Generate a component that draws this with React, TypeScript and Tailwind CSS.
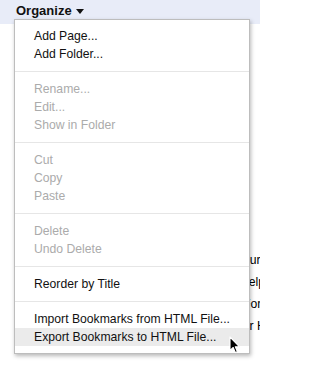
const items: ({ label: string; enabled?: boolean; active?: boolean } | "sep")[] = [
  { label: "Add Page...", enabled: true },
  { label: "Add Folder...", enabled: true },
  "sep",
  { label: "Rename..." },
  { label: "Edit..." },
  { label: "Show in Folder" },
  "sep",
  { label: "Cut" },
  { label: "Copy" },
  { label: "Paste" },
  "sep",
  { label: "Delete" },
  { label: "Undo Delete" },
  "sep",
  { label: "Reorder by Title", enabled: true },
  "sep",
  { label: "Import Bookmarks from HTML File...", enabled: true },
  { label: "Export Bookmarks to HTML File...", enabled: true, active: true },
];

const Cursor = () => (
  <svg width="12" height="18" viewBox="0 0 12 18" className="absolute left-[229px] top-[336px]">
    <path
      d="M1 1 L1 14.5 L4.2 11.5 L6.4 16.6 L8.4 15.7 L6.3 10.8 L10.6 10.8 Z"
      fill="#000"
      stroke="#fff"
      strokeWidth="1.1"
      strokeLinejoin="round"
    />
  </svg>
);

export default function App() {
  return (
    <div className="relative w-[260px] h-[366px] overflow-hidden bg-white font-['Liberation_Sans',Arial,sans-serif] text-[12.2px] text-black">
      <div className="h-[24px] bg-[#e8ecf8] pl-[16px] flex items-start pt-[3px]">
        <span className="font-bold text-[13px] leading-[16px] text-[#111]">Organize</span>
        <svg width="8" height="5" viewBox="0 0 8 5" className="ml-[4px] mt-[6px]">
          <path d="M0 0 H8 L4 5 Z" fill="#111" />
        </svg>
      </div>

      <div className="pt-[225px] leading-[22px] whitespace-nowrap">
        <div className="pl-[236px]">Your</div>
        <div className="pl-[240px]">Help</div>
        <div className="pl-[243px]">For</div>
        <div className="pl-[229px]">Your H</div>
      </div>

      <div className="absolute left-[14px] top-[19px] w-[236px] bg-white border border-[#bdbdbd] shadow-[1px_2px_4px_rgba(0,0,0,0.28)] py-[7px]">
        {items.map((it, i) =>
          it === "sep" ? (
            <div key={i} className="py-[8px]">
              <div className="h-px bg-[#e6e6e6]" />
            </div>
          ) : (
            <div
              key={i}
              className={`h-[18px] leading-[18px] pl-[19px] whitespace-nowrap ${
                it.active ? "bg-[#ebebeb]" : ""
              } ${it.enabled ? "text-[#111]" : "text-[#ababab]"}`}
            >
              {it.label}
            </div>
          )
        )}
      </div>

      <Cursor />
    </div>
  );
}
